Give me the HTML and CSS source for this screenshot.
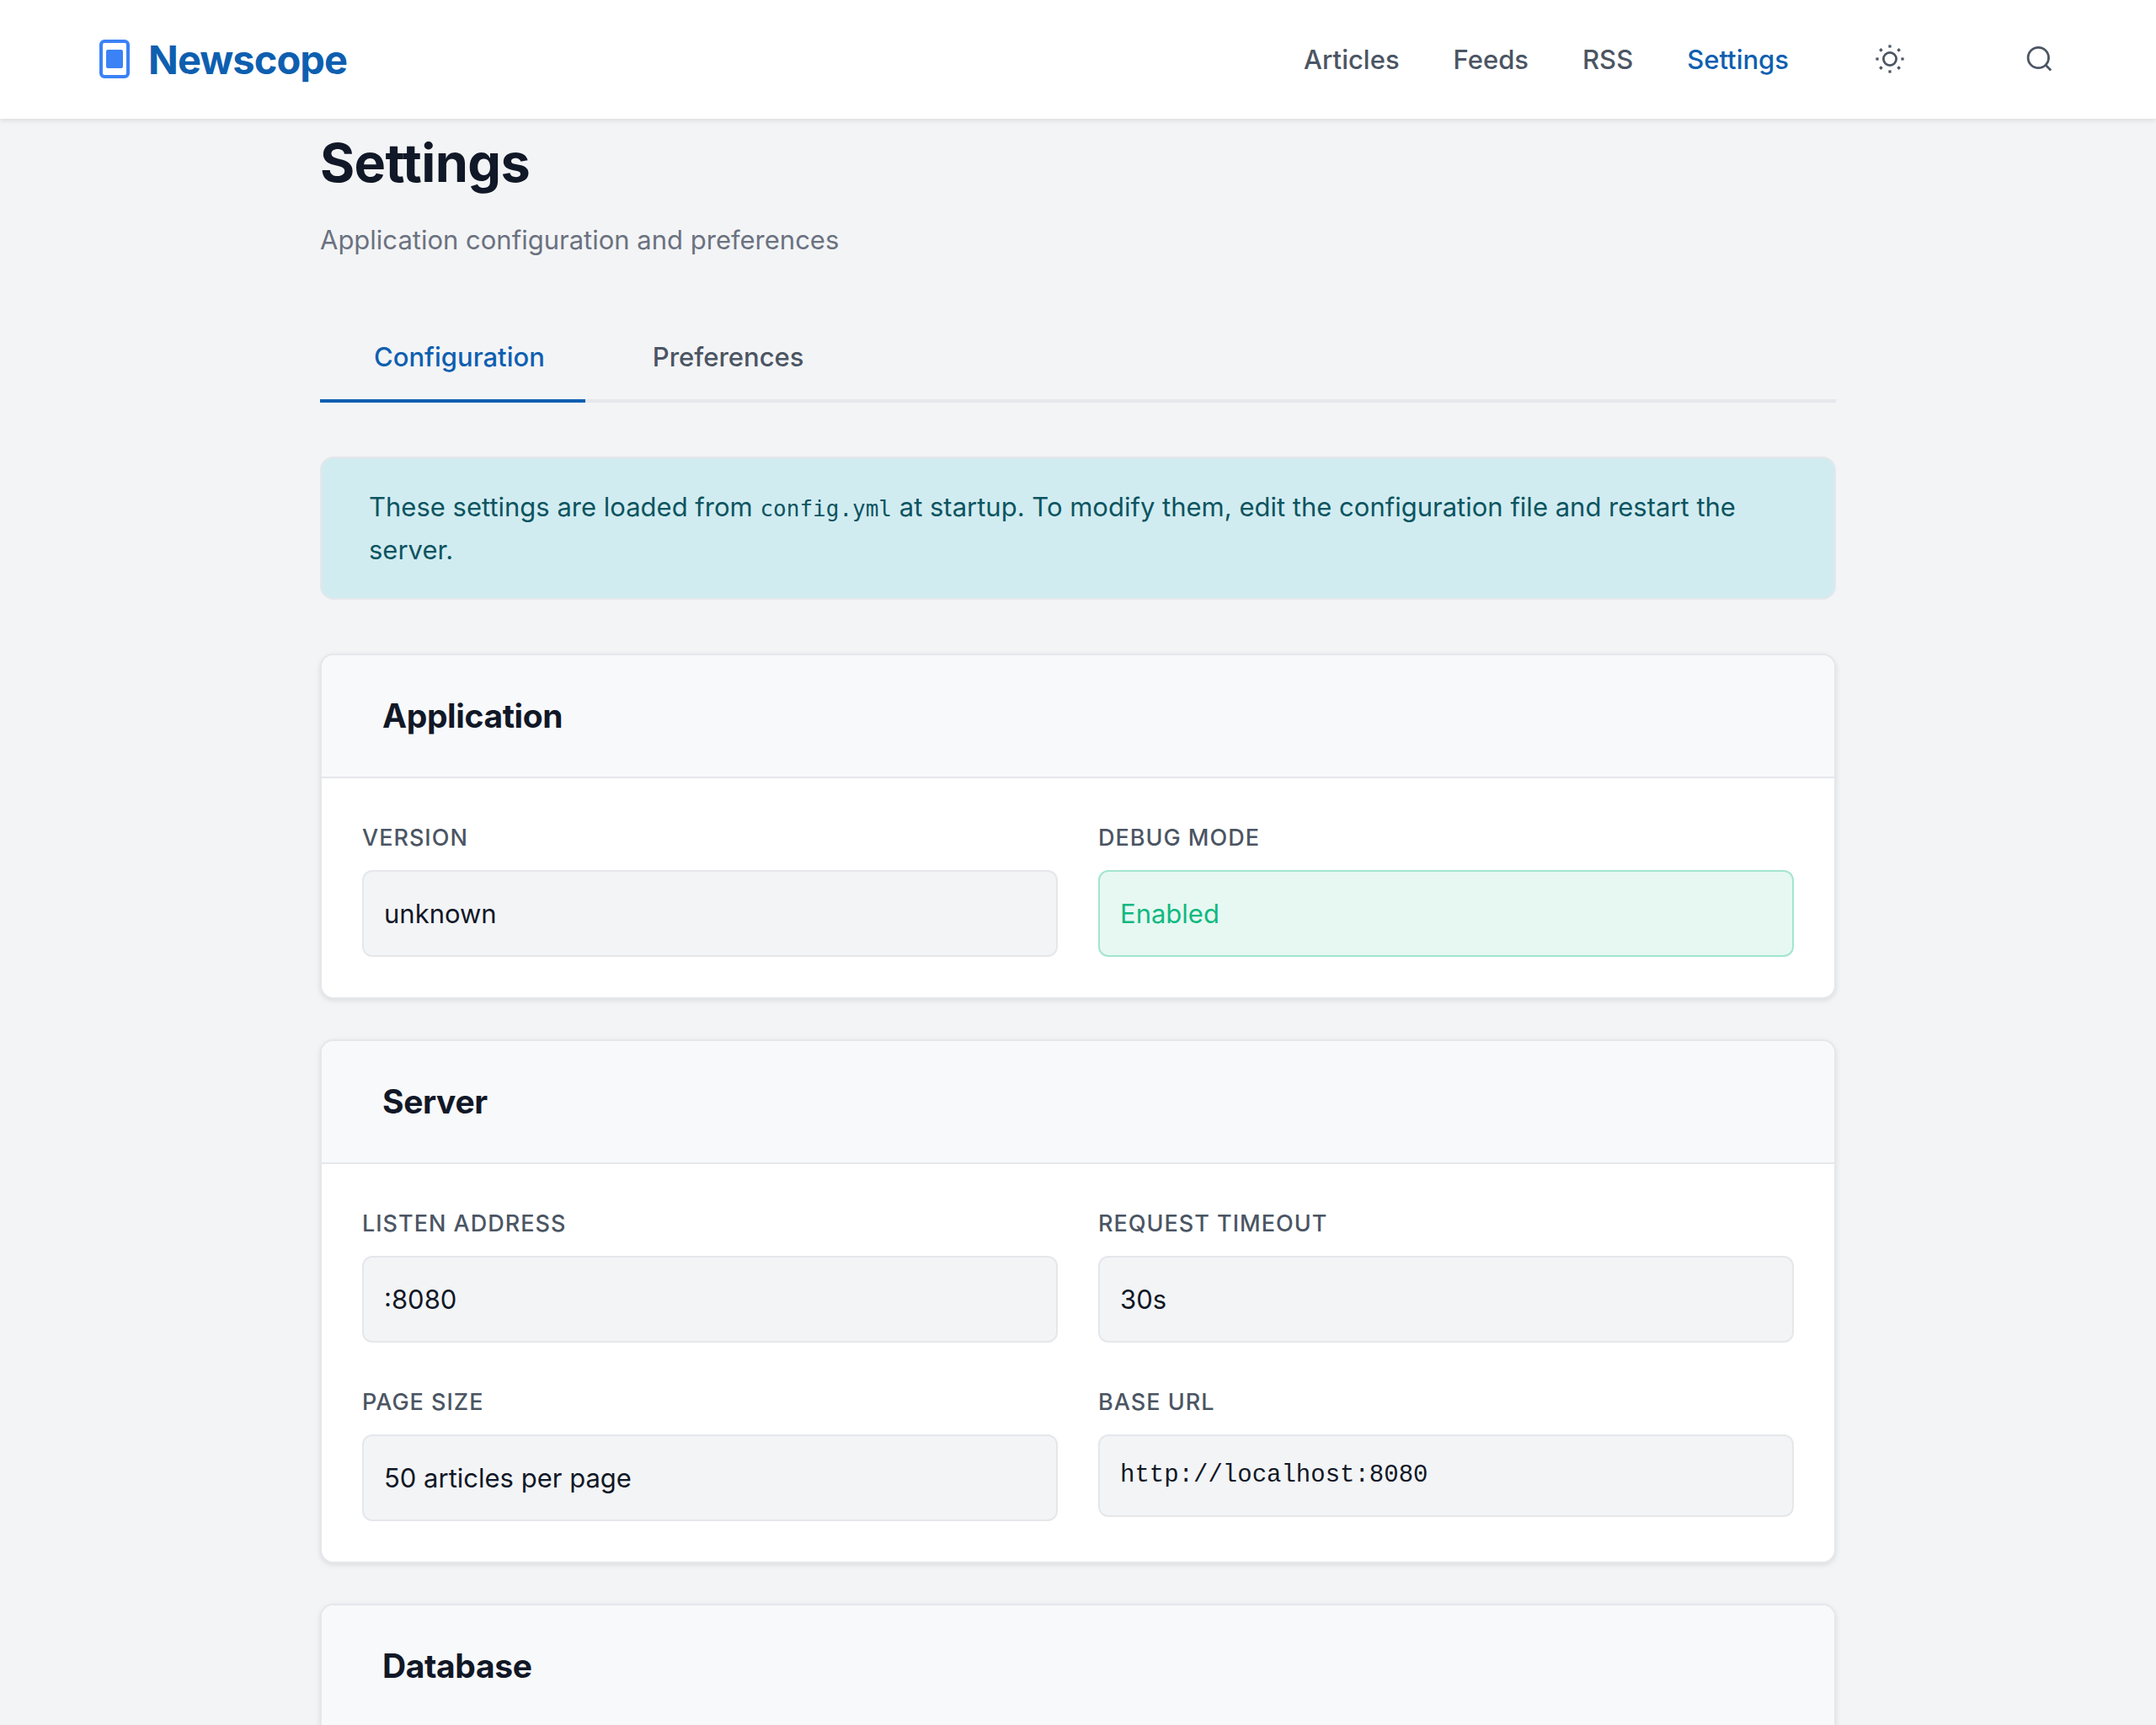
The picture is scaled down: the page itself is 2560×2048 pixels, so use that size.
FILE: index.html
```html
<!DOCTYPE html>
<html lang="en">
<head>
<meta charset="utf-8">
<title>Settings - Newscope</title>
<meta name="viewport" content="width=device-width, initial-scale=1">
<link rel="stylesheet" href="styles.css">
</head>
<body>
<header class="site-header">
  <a class="brand" href="#">
    <svg class="brand-icon" viewBox="0 0 48 48" aria-hidden="true">
      <rect x="8" y="3" width="32" height="42" rx="4" fill="none" stroke="#3b82f6" stroke-width="4"/>
      <rect x="14" y="13" width="20" height="22" rx="2" fill="#3b82f6"/>
    </svg>
    <span>Newscope</span>
  </a>
  <nav class="site-nav" aria-label="Main">
    <a class="nav-link" href="#">Articles</a>
    <a class="nav-link" href="#">Feeds</a>
    <a class="nav-link" href="#">RSS</a>
    <a class="nav-link nav-link-active" href="#" aria-current="page">Settings</a>
    <button class="icon-button" type="button" aria-label="Toggle theme">
      <svg class="icon" viewBox="0 0 40 40" aria-hidden="true" fill="currentColor">
        <circle cx="20" cy="20" r="7.6" fill="none" stroke="currentColor" stroke-width="2.8"/>
        <rect x="18.4" y="3.4" width="3.2" height="3.2"/>
        <rect x="18.4" y="33.4" width="3.2" height="3.2"/>
        <rect x="3.4" y="18.4" width="3.2" height="3.2"/>
        <rect x="33.4" y="18.4" width="3.2" height="3.2"/>
        <path d="M9.4 7.1l2.3 2.3-2.3 2.3-2.3-2.3zM30.6 7.1l2.3 2.3-2.3 2.3-2.3-2.3zM9.4 28.3l2.3 2.3-2.3 2.3-2.3-2.3zM30.6 28.3l2.3 2.3-2.3 2.3-2.3-2.3z"/>
      </svg>
    </button>
    <button class="icon-button" type="button" aria-label="Search">
      <svg class="icon" viewBox="0 0 40 40" aria-hidden="true" fill="none" stroke="currentColor" stroke-width="2.8">
        <circle cx="20.3" cy="18.5" r="12.2"/>
        <path d="M29 27.2l6.2 6.2"/>
      </svg>
    </button>
  </nav>
</header>
<main class="page">
  <div class="container">
    <h1 class="page-title">Settings</h1>
    <p class="page-subtitle">Application configuration and preferences</p>
    <div class="tabs" role="tablist">
      <button class="tab tab-active" type="button" role="tab" aria-selected="true">Configuration</button>
      <button class="tab" type="button" role="tab" aria-selected="false">Preferences</button>
    </div>
    <p class="alert">These settings are loaded from <code>config.yml</code> at startup. To modify them, edit the configuration file and restart the server.</p>
    <section class="card">
      <h2 class="card-title">Application</h2>
      <dl class="fields">
        <div><dt>Version</dt><dd>unknown</dd></div>
        <div><dt>Debug Mode</dt><dd class="enabled">Enabled</dd></div>
      </dl>
    </section>
    <section class="card">
      <h2 class="card-title">Server</h2>
      <dl class="fields">
        <div><dt>Listen Address</dt><dd>:8080</dd></div>
        <div><dt>Request Timeout</dt><dd>30s</dd></div>
        <div><dt>Page Size</dt><dd>50 articles per page</dd></div>
        <div><dt>Base URL</dt><dd class="mono">http://localhost:8080</dd></div>
      </dl>
    </section>
    <section class="card">
      <h2 class="card-title">Database</h2>
      <dl class="fields"></dl>
    </section>
  </div>
</main>
</body>
</html>
```
FILE: styles.css
```css
* { box-sizing: border-box; }

body {
  margin: 0;
  height: 100vh;
  display: flex;
  flex-direction: column;
  background: #f3f4f6;
  color: #111827;
  font: 31px/51px Inter, "Liberation Sans", sans-serif;
}

h1, h2, p, dl, dd { margin: 0; }

.site-header {
  position: relative;
  z-index: 1;
  flex: none;
  display: flex;
  align-items: center;
  justify-content: space-between;
  height: 141px;
  padding: 0 84px 1px 112px;
  background: #fff;
  box-shadow: 0 2px 6px rgba(0, 0, 0, 0.1);
}

.brand {
  display: flex;
  align-items: center;
  gap: 16px;
  color: #0e5fb0;
  font-size: 47px;
  font-weight: 700;
  letter-spacing: -0.02em;
  text-decoration: none;
}

.brand-icon { width: 48px; height: 48px; }

.site-nav {
  display: flex;
  align-items: center;
  gap: 64px;
}

.nav-link {
  color: #4b5563;
  font-weight: 500;
  text-decoration: none;
}

.nav-link-active { color: #0e5fb0; }

.icon-button {
  display: flex;
  justify-content: center;
  width: 112px;
  padding: 0;
  border: 0;
  background: none;
  color: #4b5563;
}

.icon { width: 40px; height: 40px; }

.page {
  flex: 1;
  min-height: 0;
  overflow-y: auto;
  scrollbar-width: none;
}

.container {
  max-width: 1800px;
  margin: 0 auto;
  padding: 12px 0 64px;
}

.page-title {
  margin-bottom: 26px;
  font-size: 63px;
  line-height: 80px;
  font-weight: 700;
  letter-spacing: -0.01em;
}

.page-subtitle { color: #6b7280; }

.tabs {
  display: flex;
  gap: 16px;
  margin: 64px 0;
  box-shadow: inset 0 -4px #e5e7eb;
}

.tab {
  padding: 24px 48px 25px 64px;
  border: 0;
  border-bottom: 4px solid transparent;
  background: none;
  color: #4b5563;
  font: inherit;
  font-weight: 500;
}

.tab-active {
  color: #0e5fb0;
  border-bottom-color: #0e5fb0;
}

.alert {
  margin-bottom: 64px;
  padding: 32px 56px;
  border: 2px solid #e5e7eb;
  border-radius: 16px;
  background: #d1ecf1;
  color: #0c5460;
}

.alert code { font: 26px/1 "DejaVu Sans Mono", monospace; }

.card {
  margin-bottom: 48px;
  border: 2px solid #e5e7eb;
  border-radius: 16px;
  background: #fff;
  box-shadow: 0 2px 6px rgba(0, 0, 0, 0.1);
  overflow: hidden;
}

.card-title {
  padding: 40px 72px;
  border-bottom: 2px solid #e5e7eb;
  background: #f8f9fb;
  font-size: 39px;
  line-height: 64px;
  font-weight: 700;
  letter-spacing: -0.01em;
}

.fields {
  display: grid;
  grid-template-columns: 1fr 1fr;
  align-items: start;
  gap: 48px;
  padding: 48px;
}

.fields dt {
  margin-bottom: 16px;
  color: #4b5563;
  font-size: 27px;
  line-height: 45px;
  font-weight: 500;
  letter-spacing: 1px;
  text-transform: uppercase;
}

.fields dd {
  padding: 24px;
  border: 2px solid #e5e7eb;
  border-radius: 12px;
  background: #f3f4f6;
}

.fields .enabled {
  border-color: #a3e6cf;
  background: #e7f8f2;
  color: #10b981;
}

.fields .mono {
  font: 29px/46px "Liberation Mono", monospace;
}
```
